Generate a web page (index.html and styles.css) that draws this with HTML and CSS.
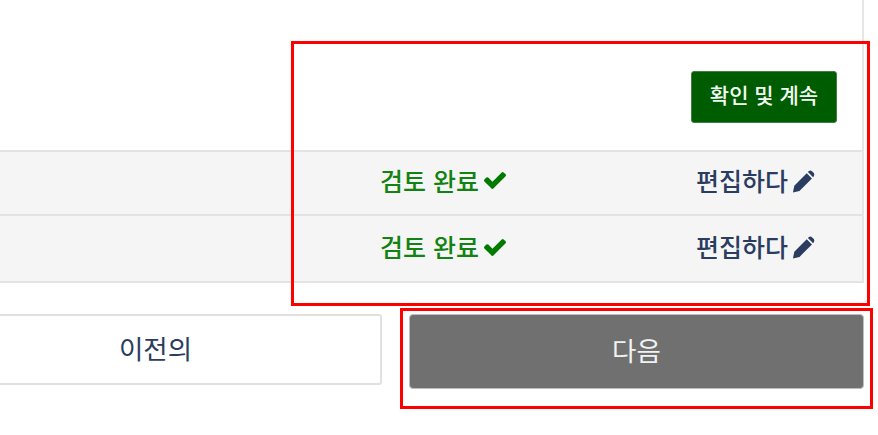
FILE: index.html
```html
<!DOCTYPE html>
<html lang="ko">
<head>
<meta charset="utf-8">
<title>검토</title>
<link rel="stylesheet" href="styles.css">
</head>
<body>
<main class="page">
  <section class="panel">
    <div class="action"><button class="confirm">확인 및 계속</button></div>
    <div class="row">
      <span class="status">검토 완료<svg class="check" viewBox="121 270 1550 1250"><path d="M1671 566q0 40-28 68l-724 724-136 136q-28 28-68 28t-68-28l-136-136-362-362q-28-28-28-68t28-68l136-136q28-28 68-28t68 28l294 295 656-657q28-28 68-28t68 28l136 136q28 28 28 68z"/></svg></span>
      <span class="edit">편집하다<svg class="pencil" viewBox="0 0 24 24"><path d="M1 23.5 2.4 16.4 15.4 3.4 20.8 8.8 7.8 21.8Z"/><path d="M16.6 2.2 17.4 1.4Q19 0 20.8 1.2L22.8 3.2Q24 5 22.6 6.8L22 7.6Z"/></svg></span>
    </div>
    <div class="row row-last">
      <span class="status">검토 완료<svg class="check" viewBox="121 270 1550 1250"><path d="M1671 566q0 40-28 68l-724 724-136 136q-28 28-68 28t-68-28l-136-136-362-362q-28-28-28-68t28-68l136-136q28-28 68-28t68 28l294 295 656-657q28-28 68-28t68 28l136 136q28 28 28 68z"/></svg></span>
      <span class="edit">편집하다<svg class="pencil" viewBox="0 0 24 24"><path d="M1 23.5 2.4 16.4 15.4 3.4 20.8 8.8 7.8 21.8Z"/><path d="M16.6 2.2 17.4 1.4Q19 0 20.8 1.2L22.8 3.2Q24 5 22.6 6.8L22 7.6Z"/></svg></span>
    </div>
  </section>
  <nav class="nav">
    <button class="prev">이전의</button>
    <button class="next">다음</button>
  </nav>
</main>
<div class="mark mark-a"></div>
<div class="mark mark-b"></div>
</body>
</html>
```
FILE: styles.css
```css
* { box-sizing: border-box; }
html, body { margin: 0; height: 100%; background: #fff; overflow: hidden; }
body { font-family: "Noto Sans CJK KR", "Noto Sans", sans-serif; color: #2a3c60; }
.page { width: 864px; }
.panel { height: 283px; border-right: 2px solid #e6e6e6; border-bottom: 2px solid #e3e3e3; }
.action { height: 150px; padding: 71px 25px 0 0; display: flex; justify-content: flex-end; align-items: flex-start; }
.confirm { width: 146px; height: 52px; border: 1px solid #3f7f3f; border-radius: 3px; background: #005c00; color: #f4fbf4; font: 500 21px "Noto Sans CJK KR", sans-serif; padding: 0 0 7px; }
.row { height: 64px; background: #f5f5f5; border-top: 2px solid #e3e3e3; display: flex; align-items: center; padding-bottom: 7px; font-size: 25px; font-weight: 500; }
.row-last { height: 67px; padding-bottom: 5px; }
.status { margin-left: 380px; width: 316px; color: #128212; display: flex; align-items: center; }
.edit { display: flex; align-items: center; color: #2a3c60; }
.check { width: 22px; height: 18px; fill: #007a00; margin: 1px 0 0 5px; }
.pencil { width: 23px; height: 23px; fill: #2a3c60; margin: 3px 0 0 4px; }
.nav { display: flex; gap: 27px; margin-top: 31px; margin-left: -71px; align-items: flex-start; }
.prev { width: 453px; height: 71px; flex: none; background: #fff; border: 2px solid #e0e0e0; border-radius: 3px; color: #2a3c60; font: 400 26.5px "Noto Sans CJK KR", sans-serif; padding: 0 0 4px; }
.next { width: 455px; height: 75px; flex: none; background: #707070; border: 1px solid #bdbdbd; border-radius: 4px; color: #f2f2f2; font: 400 26.5px "Noto Sans CJK KR", sans-serif; padding: 0 0 5px; }
.mark { position: absolute; border: 3px solid #f00; }
.mark-a { left: 291px; top: 41px; width: 579px; height: 265px; }
.mark-b { left: 400px; top: 308px; width: 473px; height: 101px; }
```
